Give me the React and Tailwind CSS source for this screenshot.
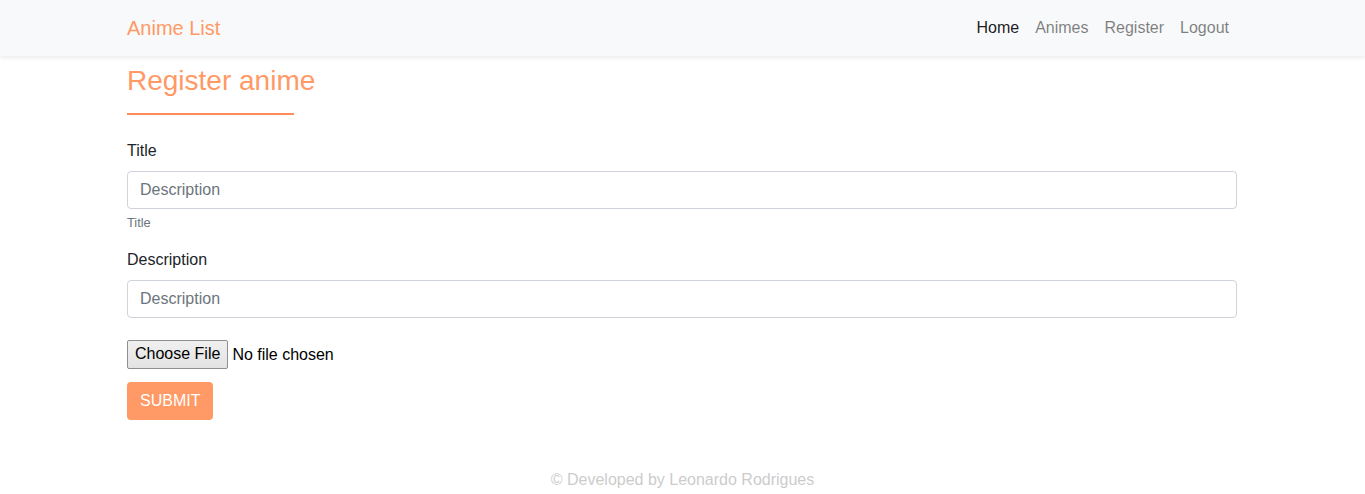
import React from 'react';

const NavBar = () => {
  const links = ['Home', 'Animes', 'Register', 'Logout'];
  return (
    <nav className="bg-[#f8f9fa] shadow-[0_2px_4px_rgba(0,0,0,0.08)] h-14">
      <div className="max-w-[1140px] mx-auto pl-[14.5px] pr-[15.5px] h-full flex items-center justify-between">
        <a className="text-[20px] text-[#ff9966] leading-[30px]">Anime List</a>
        <ul className="flex items-center">
          {links.map((link, i) => (
            <li key={link}>
              <a
                className={`block px-2 py-2 text-base leading-6 ${
                  i === 0 ? 'text-[rgba(0,0,0,0.9)]' : 'text-[rgba(0,0,0,0.5)]'
                }`}
              >
                {link}
              </a>
            </li>
          ))}
        </ul>
      </div>
    </nav>
  );
};

const App = () => {
  return (
    <div className="min-h-[494px] bg-white text-[#212529] font-['Liberation_Sans',Arial,sans-serif] flex flex-col">
      <NavBar />

      <main className="max-w-[1140px] w-full mx-auto pl-[14.5px] pr-[15.5px]">
        {/* Page title */}
        <h3 className="text-[28px] leading-[1.2] text-[#ff9966] mt-[8px]">Register anime</h3>
        <div className="w-[15%] h-[2px] bg-[#ff8c5a] mt-[15px] mb-[24px]"></div>

        <form>
          <div className="mb-4">
            <label className="block mb-2 leading-6">Title</label>
            <input
              type="text"
              placeholder="Description"
              className="block w-full h-[38px] px-3 text-base border border-[#ced4da] rounded placeholder:text-[#6c757d] outline-none"
            />
            <small className="block mt-1 text-[12.8px] leading-[19px] text-[#6c757d]">Title</small>
          </div>

          <div className="mb-4">
            <label className="block mb-2 leading-6">Description</label>
            <input
              type="text"
              placeholder="Description"
              className="block w-full h-[38px] px-3 text-base border border-[#ced4da] rounded placeholder:text-[#6c757d] outline-none"
            />
          </div>

          {/* File picker */}
          <div className="mb-[13px] pt-[6px]">
            <input
              type="file"
              className="block text-base text-black leading-[19px] file:h-[29px] file:px-[7px] file:mr-[4px] file:text-base file:text-black file:border file:border-[#8f8f8f] file:rounded-[2px] file:bg-gradient-to-b file:from-[#f0f0f0] file:to-[#e3e3e3]"
            />
          </div>

          <button
            type="button"
            className="h-[38px] px-[13px] bg-[#ff9966] text-white text-base rounded"
          >
            SUBMIT
          </button>
        </form>
      </main>

      <footer className="text-center text-[#cccccc] text-base mt-auto pb-[2px]">
        © Developed by Leonardo Rodrigues
      </footer>
    </div>
  );
};

export default App;
